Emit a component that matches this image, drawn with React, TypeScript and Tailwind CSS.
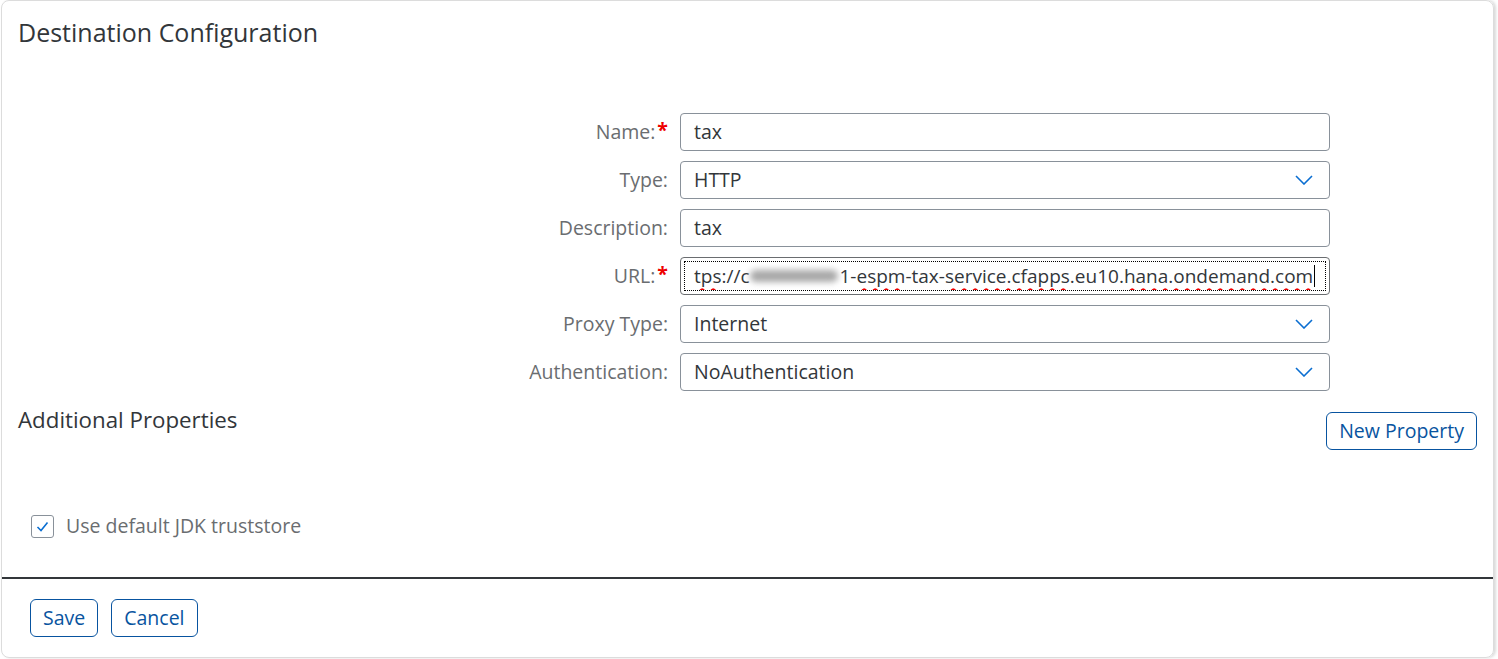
const font = { fontFamily: '"Open Sans", "Noto Sans", sans-serif' };

const Chevron = () => (
  <svg width="18" height="10" viewBox="0 0 18 10" className="shrink-0">
    <path d="M1 1 L9 9 L17 1" fill="none" stroke="#0a6ed1" strokeWidth="1.6" />
  </svg>
);

const Row = ({
  label,
  required,
  children,
}: {
  label: string;
  required?: boolean;
  children: React.ReactNode;
}) => (
  <div className="flex items-center">
    <div className="flex w-[678px] justify-end pr-[12px] text-[19.5px] leading-[26px] text-[#6a6d70]">
      <span>{label}</span>
      {required && <span className="ml-[2px] -mt-[2px] font-bold text-[#e00]">*</span>}
    </div>
    {children}
  </div>
);

const Field = ({ value, select }: { value: string; select?: boolean }) => (
  <div className="flex h-[38px] w-[650px] items-center justify-between rounded-[4px] border border-[#89919a] bg-white pl-[13px] pr-[16px] text-[19.5px] text-[#32363a]">
    <span>{value}</span>
    {select && <Chevron />}
  </div>
);

const wavy = "underline decoration-wavy decoration-[#e00] decoration-[1.5px] underline-offset-[5px]";

const UrlField = () => (
  <div className="flex h-[38px] w-[650px] items-center rounded-[4px] border border-[#6a6d70] bg-white p-[3px]">
    <div className="flex h-full w-full items-center overflow-hidden whitespace-nowrap border border-dotted border-black pl-[9px] text-[19px] text-[#32363a]">
      <span className={wavy}>tps</span>
      <span>://c</span>
      <span className="mx-[1px] inline-block h-[12px] w-[88px] rounded-full bg-[#a8a8a8] blur-[3px]"></span>
      <span>1-</span>
      <span className={wavy}>espm</span>
      <span>-tax-</span>
      <span className={wavy}>service.cfapps</span>
      <span>.eu10.</span>
      <span className={wavy}>hana.ondemand.com</span>
      <span className="ml-[1px] inline-block h-[22px] w-px bg-black"></span>
    </div>
  </div>
);

const Button = ({ children }: { children: React.ReactNode }) => (
  <button className="h-[38px] rounded-[6px] border border-[#0854a0] bg-white px-[12px] text-[19.5px] leading-[26px] text-[#0854a0]">
    {children}
  </button>
);

export default function App() {
  return (
    <div className="h-[659px] w-[1498px] bg-white pl-px pr-[4px]" style={font}>
      <div className="flex h-[658px] flex-col rounded-lg border border-[#dcdcdc] shadow-[2px_0_3px_rgba(0,0,0,0.15)]">
        <h1 className="pl-[16px] pt-[15px] text-[25px] leading-[32px] text-[#32363a]">Destination Configuration</h1>

        <div className="mt-[65px] flex flex-col gap-[10px]">
          <Row label="Name:" required>
            <Field value="tax" />
          </Row>
          <Row label="Type:">
            <Field value="HTTP" select />
          </Row>
          <Row label="Description:">
            <Field value="tax" />
          </Row>
          <Row label="URL:" required>
            <UrlField />
          </Row>
          <Row label="Proxy Type:">
            <Field value="Internet" select />
          </Row>
          <Row label="Authentication:">
            <Field value="NoAuthentication" select />
          </Row>
        </div>

        <div className="mt-[15px] flex items-start justify-between pl-[16px] pr-[16px]">
          <h2 className="text-[22.3px] leading-[28px] text-[#32363a]">Additional Properties</h2>
          <div className="mt-[6px]">
            <Button>New Property</Button>
          </div>
        </div>

        <label className="ml-[29px] mt-[63px] flex items-center gap-[12px] text-[19.5px] leading-[26px] text-[#6a6d70]">
          <span className="flex h-[23px] w-[23px] items-center justify-center rounded-[3px] border border-[#89919a] bg-white">
            <svg width="13" height="11" viewBox="0 0 13 11">
              <path d="M1.5 6 L5 9.5 L11.5 1.5" fill="none" stroke="#0a6ed1" strokeWidth="1.6" />
            </svg>
          </span>
          <span>Use default JDK truststore</span>
        </label>

        <div className="mt-[38px] h-[2px] bg-[#32363a]"></div>

        <div className="ml-[28px] mt-[20px] flex gap-[13px]">
          <Button>Save</Button>
          <Button>Cancel</Button>
        </div>
      </div>
    </div>
  );
}
